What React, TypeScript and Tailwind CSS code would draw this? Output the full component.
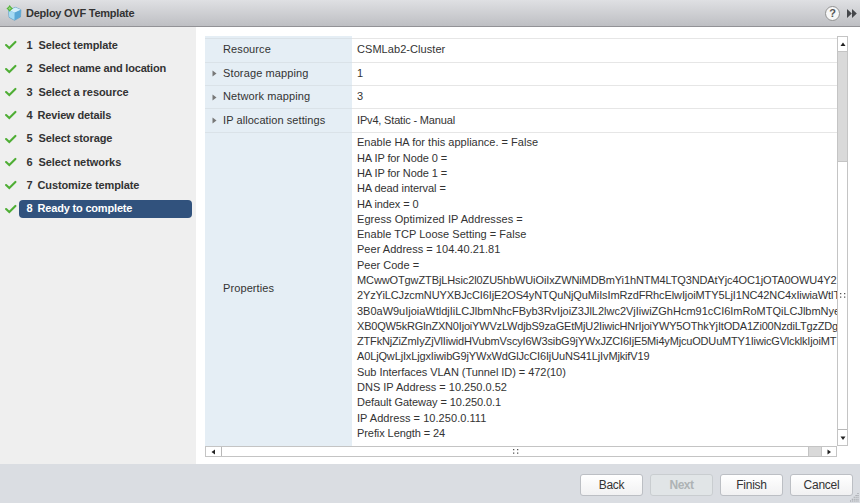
const steps = [
  { label: "Select template", gap: "w-3", spacing: "tracking-[-0.09px]" },
  { label: "Select name and location", gap: "w-3", spacing: "tracking-[-0.19px]" },
  { label: "Select a resource", gap: "w-3", spacing: "tracking-[-0.06px]" },
  { label: "Review details", gap: "w-[11px]", spacing: "tracking-[-0.15px]" },
  { label: "Select storage", gap: "w-3", spacing: "tracking-[-0.1px]" },
  { label: "Select networks", gap: "w-3", spacing: "tracking-[-0.07px]" },
  { label: "Customize template", gap: "w-[11px]", spacing: "tracking-[-0.12px]" },
  { label: "Ready to complete", gap: "w-[11px]", spacing: "tracking-[-0.18px]" },
];

const rows = [
  { label: "Resource", labelSpacing: "tracking-[0.11px]", value: "CSMLab2-Cluster", valueSpacing: "tracking-[0.06px]", expandable: false },
  { label: "Storage mapping", labelSpacing: "tracking-[0.12px]", value: "1", valueSpacing: "", expandable: true },
  { label: "Network mapping", labelSpacing: "tracking-[0.11px]", value: "3", valueSpacing: "", expandable: true },
  { label: "IP allocation settings", labelSpacing: "tracking-[0.07px]", value: "IPv4, Static - Manual", valueSpacing: "tracking-[-0.17px]", expandable: true },
];

const properties = [
  ["Enable HA for this appliance. = False", "tracking-[0.01px]"],
  ["HA IP for Node 0 =", "tracking-[-0.1px]"],
  ["HA IP for Node 1 =", "tracking-[-0.1px]"],
  ["HA dead interval =", "tracking-[-0.08px]"],
  ["HA index = 0", "tracking-[-0.1px]"],
  ["Egress Optimized IP Addresses =", "tracking-[0.06px]"],
  ["Enable TCP Loose Setting = False", "tracking-[0.02px]"],
  ["Peer Address = 104.40.21.81", "tracking-[0.02px]"],
  ["Peer Code =", ""],
  ["MCwwOTgwZTBjLHsic2l0ZU5hbWUiOiIxZWNiMDBmYi1hNTM4LTQ3NDAtYjc4OC1jOTA0OWU4Y2", "tracking-[-0.11px]"],
  ["2YzYiLCJzcmNUYXBJcCI6IjE2OS4yNTQuNjQuMiIsImRzdFRhcElwIjoiMTY5LjI1NC42NC4xIiwiaWtlT", "tracking-[-0.113px]"],
  ["3B0aW9uIjoiaWtldjIiLCJlbmNhcFByb3RvIjoiZ3JlL2lwc2VjIiwiZGhHcm91cCI6ImRoMTQiLCJlbmNye", "tracking-[-0.012px]"],
  ["XB0QW5kRGlnZXN0IjoiYWVzLWdjbS9zaGEtMjU2IiwicHNrIjoiYWY5OThkYjItODA1Zi00NzdiLTgzZDg", "tracking-[-0.183px]"],
  ["ZTFkNjZiZmIyZjVlIiwidHVubmVscyI6W3sibG9jYWxJZCI6IjE5Mi4yMjcuODUuMTY1IiwicGVlcklkIjoiMT", "tracking-[-0.172px]"],
  ["A0LjQwLjIxLjgxIiwibG9jYWxWdGlJcCI6IjUuNS41LjIvMjkifV19", "tracking-[-0.143px]"],
  ["Sub Interfaces VLAN (Tunnel ID) = 472(10)", "tracking-[-0.05px]"],
  ["DNS IP Address = 10.250.0.52", "tracking-[0px]"],
  ["Default Gateway = 10.250.0.1", "tracking-[-0.06px]"],
  ["IP Address = 10.250.0.111", "tracking-[0.05px]"],
  ["Prefix Length = 24", "tracking-[-0.08px]"],
];

function TemplateIcon() {
  return (
    <svg className="h-4 w-4 shrink-0" viewBox="0 0 16 16">
      <path d="M2.5 5 9.5 2.3 15 4.7 14.5 12 8.5 15.3 3 12.3Z" fill="#74b9df" stroke="#438fbb" strokeWidth=".5" />
      <path d="M2.7 5.2 9.5 2.6 14.8 4.8 8.7 7.6Z" fill="#d4eef9" />
      <path d="M2.7 5.3 8.6 7.7 8.5 15 3.2 12.1Z" fill="#a5daf3" />
      <path d="M8.8 7.7 14.7 5.1 14.2 11.8 8.7 15Z" fill="#59a8d6" />
      <path d="M3.7 0 5.1 1.9 7 3.4 5.1 4.9 3.7 6.8 2.3 4.9.4 3.4 2.3 1.9Z" fill="#54b23b" />
      <path d="M3.7 2v2.8M2.3 3.4h2.8" stroke="#a3dc86" strokeWidth=".8" />
    </svg>
  );
}

function Check() {
  return (
    <svg className="h-[10px] w-3 shrink-0" viewBox="0 0 12 10" fill="none">
      <path d="M1.1 5 4.3 8 10.4 1.9" stroke="#4fae35" strokeWidth="2.1" strokeLinecap="round" />
    </svg>
  );
}

const arrows = {
  up: "M0.5 5 3 1.5 5.5 5Z",
  down: "M0.5 1.5 3 5 5.5 1.5Z",
  left: "M5 .5 1.5 3 5 5.5Z",
  right: "M1.5 .5 5 3 1.5 5.5Z",
};

function Arrow({ dir }: { dir: keyof typeof arrows }) {
  return (
    <svg className="h-[6px] w-[6px] shrink-0" viewBox="0 0 6 6">
      <path d={arrows[dir]} fill="#222" />
    </svg>
  );
}

function Grip() {
  return (
    <svg className="h-[5px] w-[6px]" viewBox="0 0 6 5" fill="#555">
      <path d="M0 0h1.3v1.3H0zM4 0h1.3v1.3H4zM0 3.5h1.3v1.3H0zM4 3.5h1.3v1.3H4z" />
    </svg>
  );
}

function FooterButton({ label, disabled = false }: { label: string; disabled?: boolean }) {
  return (
    <button
      disabled={disabled}
      className={
        disabled
          ? "h-[22px] w-[63px] rounded-[3px] border border-[#c9cdd0] bg-[#e1e5e7] text-[12px] font-bold leading-5 tracking-[-0.5px] text-[#aeb3b5]"
          : "h-[22px] w-[63px] rounded-[3px] border border-[#bcbfc4] bg-linear-to-b from-white to-[#f1f1f2] text-[12px] leading-5 tracking-[-0.25px] text-[#333]"
      }
    >
      {label}
    </button>
  );
}

export default function App() {
  return (
    <div className="flex h-[503px] w-[860px] flex-col overflow-hidden bg-white font-['Liberation_Sans',Arial,sans-serif] text-[11px] text-[#333]">
      <header className="flex h-[27px] shrink-0 items-center border-b border-[#929296] bg-linear-to-b from-[#dfe0e3] to-[#bebfc3] pl-[6px] pr-[3px]">
        <TemplateIcon />
        <h1 className="ml-[4px] flex-1 text-[11px] font-bold tracking-[-0.24px]">Deploy OVF Template</h1>
        <button className="flex h-[15px] w-[15px] items-center justify-center rounded-full border border-[#929292] bg-[#f7f7f7] text-[11px] font-bold leading-none text-[#555]">
          ?
        </button>
        <svg className="ml-[6px] h-[9px] w-[11px]" viewBox="0 0 11 9" fill="#44464a">
          <path d="M1 0 5.8 4.5 1 9ZM6 0 10.8 4.5 6 9Z" />
        </svg>
      </header>

      <div className="flex h-[437px] shrink-0">
        <nav className="w-[196px] shrink-0 bg-[#efefef] pr-1 pt-[6.5px]">
          {steps.map((s, i) => (
            <div key={s.label} className="flex h-[23.35px] items-center pl-[5px] font-bold">
              <Check />
              <div
                className={
                  i === 7
                    ? "ml-[2px] flex h-[18px] flex-1 items-center rounded-[4px] bg-[#31527d] pl-[7.5px] text-white"
                    : "ml-[2px] flex h-[18px] flex-1 items-center pl-[7.5px]"
                }
              >
                <span className={s.gap}>{i + 1}</span>
                <span className={"whitespace-nowrap " + s.spacing}>{s.label}</span>
              </div>
            </div>
          ))}
        </nav>

        <main className="flex flex-col pl-[9px] pt-[9px]">
          <div className="flex h-[410px]">
            <section className="flex w-[632px] flex-col overflow-hidden">
              <div className="h-[2.3px] w-[147px] shrink-0 bg-[#e5eef5]" />
              {rows.map((r) => (
                <div key={r.label} className="flex h-[23.4px] shrink-0">
                  <div className="flex w-[147px] shrink-0 items-center border-t border-[#dae2e8] bg-[#e5eef5] pb-[1.5px] pl-[7px]">
                    <span className="flex w-[11px]">
                      {r.expandable && (
                        <svg className="mt-[1px] h-[7px] w-[5px]" viewBox="0 0 5 7">
                          <path d="M.5.5 4.5 3.5.5 6.5Z" fill="#777" />
                        </svg>
                      )}
                    </span>
                    <span className={r.labelSpacing}>{r.label}</span>
                  </div>
                  <div className="flex flex-1 items-center border-t border-[#e6e6e6] pb-[1.5px] pl-[5px]">
                    <span className={r.valueSpacing}>{r.value}</span>
                  </div>
                </div>
              ))}
              <div className="flex flex-1">
                <div className="flex w-[147px] shrink-0 items-center border-t border-[#dae2e8] bg-[#e5eef5] pb-[3px] pl-[18px] tracking-[0.1px]">
                  Properties
                </div>
                <div className="min-w-0 flex-1 overflow-hidden border-t border-[#e6e6e6] pl-[5px] pt-[2.6px]">
                  {properties.map(([text, spacing]) => (
                    <div key={text} className={"h-[15.29px] whitespace-nowrap leading-[15.29px] " + spacing}>
                      {text}
                    </div>
                  ))}
                </div>
              </div>
            </section>

            <div className="flex w-[11px] flex-col border border-[#c4c4c4] bg-[#d9d9d9]">
              <div className="flex h-[15px] items-center justify-center border-b border-[#c4c4c4] bg-white">
                <Arrow dir="up" />
              </div>
              <div className="h-[109px]" />
              <div className="flex flex-1 items-center justify-center border-t border-[#c4c4c4] bg-white">
                <Grip />
              </div>
              <div className="flex h-4 items-center justify-center border-t border-[#b8b8b8] bg-white">
                <Arrow dir="down" />
              </div>
            </div>
          </div>

          <div className="flex h-[11px] w-[632px] border border-[#c4c4c4] bg-[#d9d9d9]">
            <div className="flex w-4 items-center justify-center border-r border-[#b8b8b8] bg-white pr-[2px]">
              <Arrow dir="left" />
            </div>
            <div className="flex w-[587px] items-center justify-center border-r border-[#c4c4c4] bg-white pl-[2px]">
              <Grip />
            </div>
            <div className="flex-1" />
            <div className="flex w-[15px] items-center justify-center border-l border-[#c4c4c4] bg-white">
              <Arrow dir="right" />
            </div>
          </div>
        </main>
      </div>

      <footer className="relative flex flex-1 items-start justify-end gap-[7px] bg-[#dadde2] pr-[7px] pt-[10px]">
        <FooterButton label="Back" />
        <FooterButton label="Next" disabled />
        <FooterButton label="Finish" />
        <FooterButton label="Cancel" />
        <svg className="absolute bottom-[1px] right-[1px] h-[9px] w-[9px]" viewBox="0 0 9 9" fill="#94979c">
          <path d="M7.5 0h1v1h-1zM5.6 1.9h1v1h-1zM7.5 1.9h1v1h-1zM3.7 3.8h1v1h-1zM5.6 3.8h1v1h-1zM7.5 3.8h1v1h-1zM1.8 5.7h1v1h-1zM3.7 5.7h1v1h-1zM5.6 5.7h1v1h-1zM7.5 5.7h1v1h-1zM0 7.6h1v1H0zM1.8 7.6h1v1h-1zM3.7 7.6h1v1h-1zM5.6 7.6h1v1h-1zM7.5 7.6h1v1h-1z" />
        </svg>
      </footer>
    </div>
  );
}
